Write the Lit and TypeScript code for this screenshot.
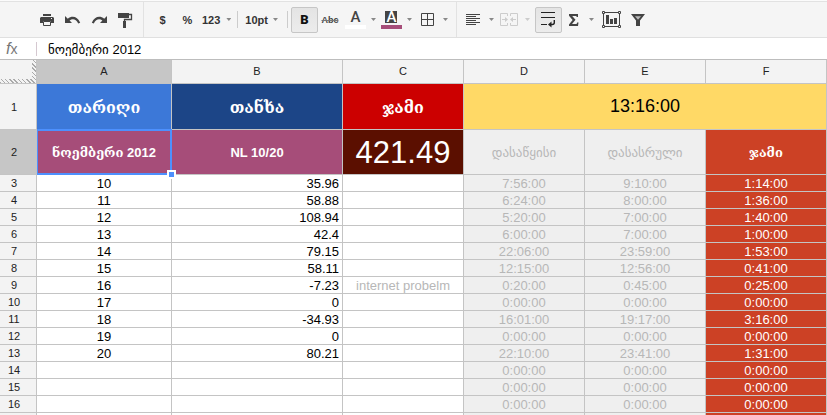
import { LitElement, html, css, svg, nothing } from "lit";
import { customElement, state } from "lit/decorators.js";
import { classMap } from "lit/directives/class-map.js";

interface Row {
  n: number;
  day?: string;
  amount?: string;
  note?: string;
  start?: string;
  end?: string;
  total?: string;
}

const ROWS: Row[] = [
  { n: 3, day: "10", amount: "35.96", start: "7:56:00", end: "9:10:00", total: "1:14:00" },
  { n: 4, day: "11", amount: "58.88", start: "6:24:00", end: "8:00:00", total: "1:36:00" },
  { n: 5, day: "12", amount: "108.94", start: "5:20:00", end: "7:00:00", total: "1:40:00" },
  { n: 6, day: "13", amount: "42.4", start: "6:00:00", end: "7:00:00", total: "1:00:00" },
  { n: 7, day: "14", amount: "79.15", start: "22:06:00", end: "23:59:00", total: "1:53:00" },
  { n: 8, day: "15", amount: "58.11", start: "12:15:00", end: "12:56:00", total: "0:41:00" },
  { n: 9, day: "16", amount: "-7.23", note: "internet probelm", start: "0:20:00", end: "0:45:00", total: "0:25:00" },
  { n: 10, day: "17", amount: "0", start: "0:00:00", end: "0:00:00", total: "0:00:00" },
  { n: 11, day: "18", amount: "-34.93", start: "16:01:00", end: "19:17:00", total: "3:16:00" },
  { n: 12, day: "19", amount: "0", start: "0:00:00", end: "0:00:00", total: "0:00:00" },
  { n: 13, day: "20", amount: "80.21", start: "22:10:00", end: "23:41:00", total: "1:31:00" },
  { n: 14, start: "0:00:00", end: "0:00:00", total: "0:00:00" },
  { n: 15, start: "0:00:00", end: "0:00:00", total: "0:00:00" },
  { n: 16, start: "0:00:00", end: "0:00:00", total: "0:00:00" },
];

const icon = (w: number, h: number, body: unknown) => html`
  <svg width=${w} height=${h} viewBox="0 0 ${w} ${h}" aria-hidden="true">${body}</svg>
`;

const ICONS = {
  print: icon(14, 14, svg`
    <path d="M3 1h8v2H3z" fill="#444"/>
    <path d="M1 4h12l1 1v5h-3V8H3v2H0V5z" fill="#444"/>
    <path d="M3.500 8.500h7v4h-7z" fill="#f5f5f5" stroke="#444"/>
    <path d="M11 5h1v1h-1z" fill="#f5f5f5"/>`),
  undo: icon(16, 10, svg`
    <path d="M0 1v7h7L4.600 5.600C7.500 3.400 11 4 13.200 8.500l2-.8C12.500 1.500 7 .3 2.800 3.800z" fill="#444"/>`),
  redo: icon(16, 10, svg`
    <path d="M16 1v7H9l2.400-2.400C8.500 3.400 5 4 2.800 8.500l-2-.8C3.500 1.500 9 .3 13.200 3.800z" fill="#444"/>`),
  roller: icon(16, 16, svg`
    <path d="M1 1h11v5H1z" fill="#444"/>
    <path d="M12 2.500h2.500v5h-7V10" fill="none" stroke="#444" stroke-width="1.300"/>
    <path d="M6 9h3v7H6z" fill="#444"/>`),
  borders: icon(13, 13, svg`
    <path d="M.5 .5h12v12H.5zM6.500 .5v12M.5 6.500h12" fill="none" stroke="#444"/>`),
  align: icon(14, 13, svg`
    <path d="M0 1.500h14M0 3.500h10M0 5.500h14M0 7.500h10M0 9.500h14M0 11.500h10" stroke="#444"/>`),
  merge: icon(18, 13, svg`
    <path d="M7.500 3V.5h-7v12h7V10M10.500 3V.5h7v12h-7V10" fill="none" stroke="#ccc"/>
    <path d="M2 6.500h4M12 6.500h4" stroke="#ccc"/>
    <path d="M5 4l3 2.500L5 9zM13 4l-3 2.500L13 9z" fill="#ccc"/>`),
  wrap: icon(16, 17, svg`
    <path d="M1 1.500h14M1 6.500h14M1 13.500h6" fill="none" stroke="#222" stroke-width="1.200"/>
    <path d="M14.300 9v2.500q0 2-2 2H10.500" fill="none" stroke="#222" stroke-width="1.400"/>
    <path d="M11.500 10.500v6l-3.500-3z" fill="#222"/>`),
  sum: icon(11, 12, svg`
    <path d="M1 0h9v3H8.700L8.300 2H4.200l3.300 3.800L4 10h4.600l.5-1.500h1.400L10 12H1v-1.600L4.600 6 1 1.700z" fill="#444"/>`),
  chart: icon(19, 17, svg`
    <path d="M1.500 1.500h16v14h-16z" fill="none" stroke="#444"/>
    <path d="M.5 .5h2v2h-2zM16.500 .5h2v2h-2zM.5 14.500h2v2h-2zM16.500 14.500h2v2h-2z" fill="#f5f5f5" stroke="#444"/>
    <path d="M4 4h3v9H4zM8 8h3v5H8zM12 7h3v6h-3z" fill="#444"/>`),
  filter: icon(14, 12, svg`
    <path d="M0 0h14L9 6.500V12H5V6.500z" fill="#444"/>
    <path d="M4 2.200h6L7 5.800z" fill="#bbb"/>`),
};

@customElement("sheet-toolbar")
export class SheetToolbar extends LitElement {
  static styles = css`
    :host {
      display: block;
      padding-top: 1px;
      background: #fbfbfb;
      font: bold 11px/16px "Liberation Sans", Arial, sans-serif;
    }
    .bar {
      display: flex;
      align-items: center;
      height: 35px;
      padding-left: 34px;
      border-top: 1px solid #e2e2e2;
      border-bottom: 1px solid #e0e0e0;
      background: #f5f5f5;
      overflow: hidden;
    }
    .group {
      display: flex;
      align-items: center;
      height: 35px;
      flex: none;
    }
    .first { padding-right: 5px; }
    .second { padding: 0 3px 0 6px; border-left: 1px solid #e2e2e2; }
    .third { padding-left: 6px; border-left: 1px solid #e2e2e2; }
    button {
      display: flex;
      align-items: center;
      justify-content: center;
      flex: none;
      box-sizing: border-box;
      height: 26px;
      margin: 0;
      padding: 0;
      border: 0;
      background: none;
      color: #333;
      font: inherit;
    }
    svg { display: block; flex: none; }
    .tool { width: 26px; }
    .format { width: 25px; }
    .number { padding: 0 6px 0 2px; gap: 6px; }
    .size { padding: 0 9px 0 7px; gap: 5px; }
    .drop { padding-right: 5px; gap: 5px; }
    .face {
      display: flex;
      flex-direction: column;
      align-items: center;
      justify-content: center;
      width: 21px;
    }
    .arrow {
      width: 5px;
      height: 3px;
      background: #888;
      clip-path: polygon(0 0, 100% 0, 50% 100%);
    }
    .faint { background: #ccc; }
    .rule { width: 1px; height: 17px; background: #ccc; }
    .pressed {
      width: 27px;
      border: 1px solid #c6c6c6;
      border-radius: 2px;
      background: linear-gradient(#e4e4e4, #ececec);
    }
    .bold { margin-left: 3px; color: #111; font-size: 13px; font-family: Roboto, sans-serif; font-weight: 900; }
    .strike {
      width: 24px;
      margin-right: 3px;
      color: #444;
      font-size: 9px;
      text-decoration: line-through #777;
    }
    .letter {
      width: 12px;
      height: 12px;
      margin-bottom: 2px;
      color: #444;
      font: 500 15px/12px Roboto, sans-serif;
      text-align: center;
    }
    .inverse { background: #444; color: #fff; }
    .swatch { width: 21px; height: 4px; background: #fff; }
    .plum { background: #a64d79; }
    .sum { padding-left: 1px; }
  `;

  private arrow(faint = false) {
    return html`<span class=${classMap({ arrow: true, faint })}></span>`;
  }

  private drop(label: string, face: unknown, extra = "", faint = false) {
    return html`<button class="drop ${extra}" aria-label=${label} ?disabled=${faint}>
      <span class="face">${face}</span>${this.arrow(faint)}
    </button>`;
  }

  render() {
    return html`
      <div class="bar" role="toolbar">
        <div class="group first">
          <button class="tool" aria-label="Print">${ICONS.print}</button>
          <button class="tool" aria-label="Undo">${ICONS.undo}</button>
          <button class="tool" aria-label="Redo">${ICONS.redo}</button>
          <button class="tool" aria-label="Paint format">${ICONS.roller}</button>
        </div>
        <div class="group second">
          <button class="format">$</button>
          <button class="format">%</button>
          <button class="number">123${this.arrow()}</button>
          <span class="rule"></span>
          <button class="size">10pt${this.arrow()}</button>
          <span class="rule"></span>
          <button class="pressed bold" aria-pressed="true">B</button>
          <button class="strike">Abc</button>
          ${this.drop("Text color", html`<span class="letter">A</span><span class="swatch"></span>`)}
          ${this.drop("Fill color", html`<span class="letter inverse">A</span><span class="swatch plum"></span>`)}
          ${this.drop("Borders", ICONS.borders)}
        </div>
        <div class="group third">
          ${this.drop("Align", ICONS.align)}
          ${this.drop("Merge", ICONS.merge, "", true)}
          <button class="pressed" aria-label="Wrap text" aria-pressed="true">${ICONS.wrap}</button>
          ${this.drop("Functions", ICONS.sum, "sum")}
          <button class="tool" aria-label="Insert chart">${ICONS.chart}</button>
          <button class="tool" aria-label="Filter">${ICONS.filter}</button>
        </div>
      </div>
    `;
  }
}

@customElement("sheet-grid")
export class SheetGrid extends LitElement {
  static styles = css`
    :host { display: block; }
    table {
      width: 100%;
      table-layout: fixed;
      border-collapse: separate;
      border-spacing: 0;
      font: 13px/15px "Liberation Sans", "DejaVu Sans", Arial, sans-serif;
      color: #000;
    }
    .c-head { width: 37px; }
    .c-a { width: 135px; }
    .c-b { width: 171px; }
    .c-n { width: 121px; }
    th, td {
      height: 15px;
      padding: 1px 0 0;
      border-right: 1px solid #c4c4c4;
      border-bottom: 1px solid #c4c4c4;
      text-align: center;
      vertical-align: middle;
      white-space: nowrap;
      overflow: hidden;
    }
    th { background: #f3f3f3; color: #222; font-size: 11px; font-weight: normal; }
    .letters th { height: 23px; padding: 0; }
    .row { padding-right: 8px; }
    .on { background: #c6c6c6; }
    .corner {
      background:
        linear-gradient(#f3f3f3, #f3f3f3) 0 0 / 32px 19px no-repeat,
        repeating-linear-gradient(45deg, #aaa 0 1px, #f3f3f3 1px 3px);
    }
    .title td {
      height: 44px;
      color: #fff;
      font-family: "Liberation Sans", "DejaVu Serif", serif;
      font-size: 16px;
      font-weight: bold;
    }
    .sub td {
      height: 43px;
      color: #fff;
      font-family: "Liberation Sans", "DejaVu Serif", serif;
      font-weight: bold;
    }
    .blue { background: #3c78d8; }
    .navy { background: #1c4587; }
    .red { background: #cc0000; }
    .title .gold { height: 45px; padding: 0; background: #ffd966; color: #000; font-size: 18px; font-weight: normal; }
    .plum { background: #a64d79; }
    .sub .sum { background: #5b0f00; font-size: 31px; font-weight: normal; }
    .gray { background: #efefef; color: #b7b7b7; }
    .sub .gray { color: #b7b7b7; font-family: "DejaVu Sans", sans-serif; font-weight: normal; }
    .rust { background: #cc4125; color: #fff; }
    .num { padding-right: 3px; text-align: right; }
    .note { color: #b7b7b7; }
    .sub .active { position: relative; overflow: visible; }
    .ring {
      position: absolute;
      inset: -1px -1px -1px 0;
      border: 2px solid #4d90fe;
      border-left-width: 1px;
      pointer-events: none;
    }
    .grip {
      position: absolute;
      right: -5px;
      bottom: -5px;
      width: 5px;
      height: 5px;
      border: 2px solid #fff;
      background: #4d90fe;
    }
  `;

  render() {
    return html`
      <table>
        <colgroup>
          <col class="c-head" /><col class="c-a" /><col class="c-b" />
          <col class="c-n" /><col class="c-n" /><col class="c-n" /><col class="c-n" />
        </colgroup>
        <thead>
          <tr class="letters">
            <th class="corner"></th>
            ${["A", "B", "C", "D", "E", "F"].map(
              (l) => html`<th scope="col" class=${classMap({ on: l === "A" })}>${l}</th>`
            )}
          </tr>
        </thead>
        <tbody>
          <tr class="title">
            <th class="row" scope="row">1</th>
            <td class="blue">თარიღი</td>
            <td class="navy">თანხა</td>
            <td class="red">ჯამი</td>
            <td class="gold" colspan="3">13:16:00</td>
          </tr>
          <tr class="sub">
            <th class="row on" scope="row">2</th>
            <td class="plum active">ნოემბერი 2012<span class="ring"></span><span class="grip"></span></td>
            <td class="plum">NL 10/20</td>
            <td class="sum">421.49</td>
            <td class="gray">დასაწყისი</td>
            <td class="gray">დასასრული</td>
            <td class="rust">ჯამი</td>
          </tr>
          ${ROWS.map(
            (r) => html`<tr>
              <th class="row" scope="row">${r.n}</th>
              <td>${r.day ?? nothing}</td>
              <td class="num">${r.amount ?? nothing}</td>
              <td class="note">${r.note ?? nothing}</td>
              <td class="gray">${r.start}</td>
              <td class="gray">${r.end}</td>
              <td class="rust">${r.total}</td>
            </tr>`
          )}
          <tr>
            <th class="row"></th><td></td><td></td><td></td>
            <td class="gray"></td><td class="gray"></td><td class="rust"></td>
          </tr>
        </tbody>
      </table>
    `;
  }
}

@customElement("app-root")
export class AppRoot extends LitElement {
  @state() private formula = "ნოემბერი 2012";

  static styles = css`
    :host {
      display: flex;
      flex-direction: column;
      height: 100vh;
      overflow: hidden;
      background: #fff;
    }
    .formula {
      display: flex;
      align-items: center;
      flex: none;
      height: 21px;
      border-bottom: 1px solid #bdbdbd;
    }
    .fx {
      box-sizing: border-box;
      width: 36px;
      padding-left: 6px;
      color: #777;
      font: italic 16px/20px "Liberation Sans", Arial, sans-serif;
    }
    .x { font-size: 14px; font-style: normal; }
    .value {
      flex: 1;
      min-width: 0;
      height: 14px;
      padding: 1px 0 0 11px;
      box-sizing: border-box;
      border: 0;
      border-left: 1px solid #d5c8d0;
      outline: 0;
      background: none;
      color: #000;
      font: 13px/13px "Liberation Sans", "DejaVu Sans", Arial, sans-serif;
    }
    .sheet { flex: 1; min-height: 0; overflow: hidden; }
  `;

  render() {
    return html`
      <sheet-toolbar></sheet-toolbar>
      <div class="formula">
        <label class="fx" for="formula">f<span class="x">x</span></label>
        <input
          id="formula"
          class="value"
          .value=${this.formula}
          @input=${(e: Event) => (this.formula = (e.target as HTMLInputElement).value)}
        />
      </div>
      <sheet-grid class="sheet"></sheet-grid>
    `;
  }
}
